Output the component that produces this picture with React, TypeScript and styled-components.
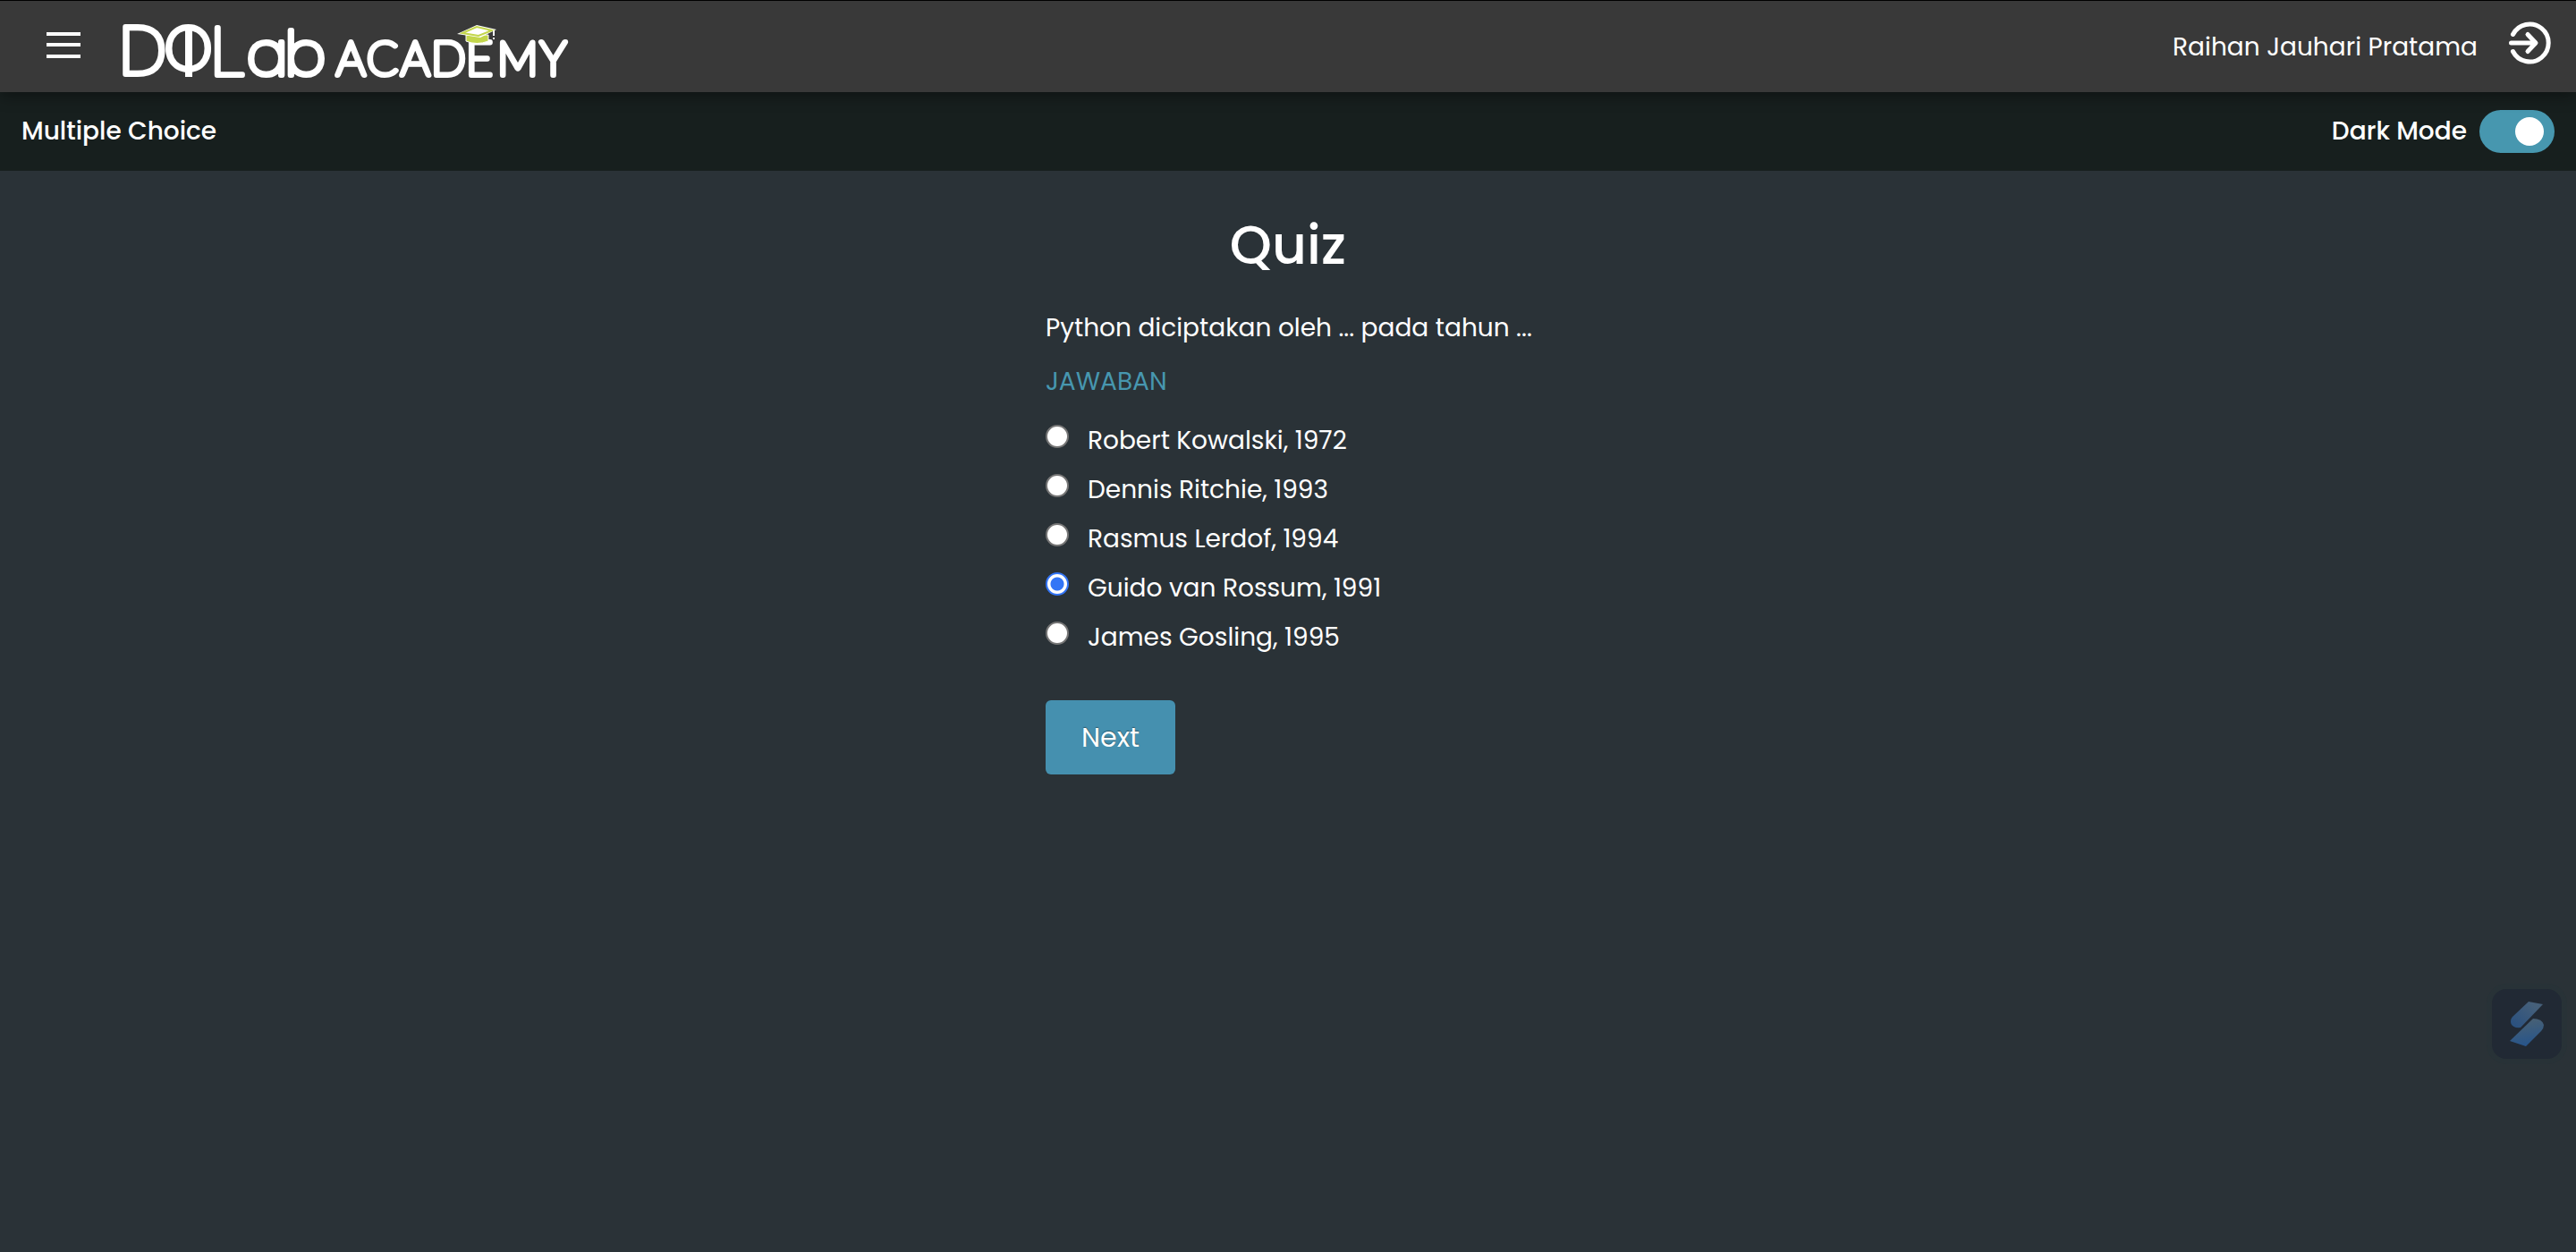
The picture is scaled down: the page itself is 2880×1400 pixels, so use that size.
import React, { useState } from "react";
import styled, { createGlobalStyle } from "styled-components";

const GlobalStyle = createGlobalStyle`
  *, *::before, *::after { box-sizing: border-box; }
  body {
    margin: 0;
    background: #2a3237;
    color: #fff;
    font-family: Poppins, Inter, "Liberation Sans", sans-serif;
    font-size: 28px;
    line-height: 42px;
  }
`;

const Page = styled.div`
  border-top: 1px solid #000;
  min-height: 100vh;
`;

const Header = styled.header`
  display: flex;
  align-items: center;
  height: 102px;
  padding: 0 28px 0 52px;
  background: #393939;
  position: relative;
  box-shadow: 0 4px 16px rgba(0, 0, 0, 0.4);
`;

const IconButton = styled.button`
  display: flex;
  padding: 0;
  border: 0;
  background: none;
  color: inherit;
  cursor: pointer;
`;

const HomeLink = styled.a`
  display: flex;
  margin-left: 30px;
`;

const Account = styled.div`
  display: flex;
  align-items: center;
  gap: 35px;
  margin-left: auto;
`;

const UserName = styled.span`
  padding-top: 2px;
`;

const SubBar = styled.div`
  display: flex;
  align-items: center;
  justify-content: space-between;
  height: 88px;
  padding: 0 24px;
  background: #171f1e;
  font-weight: 500;
`;

const SubTitle = styled.h1`
  margin: 0;
  font-size: 28px;
  font-weight: 500;
`;

const ModeLabel = styled.label`
  display: flex;
  align-items: center;
  gap: 14px;
  cursor: pointer;
`;

const Switch = styled.input`
  appearance: none;
  display: flex;
  align-items: center;
  width: 84px;
  height: 48px;
  margin: 0;
  padding: 0 12px;
  border-radius: 24px;
  background: #8a9499;
  cursor: pointer;

  &::before {
    content: "";
    width: 32px;
    height: 32px;
    border-radius: 50%;
    background: #fff;
  }
  &:checked {
    justify-content: flex-end;
    background: #4797af;
  }
`;

const Content = styled.main`
  width: 542px;
  max-width: 100%;
  margin: 0 auto;
  padding-top: 43px;
`;

const Title = styled.h2`
  margin: 0 0 32px;
  font-size: 60px;
  line-height: 80px;
  font-weight: 500;
  text-align: center;
`;

const Question = styled.p`
  margin: 0 0 18px;
  white-space: nowrap;
`;

const Answers = styled.fieldset`
  display: flex;
  flex-direction: column;
  gap: 13px;
  margin: 0;
  padding: 0;
  border: 0;
`;

const Legend = styled.legend`
  padding: 0;
  margin-bottom: 24px;
  color: #4797af;
`;

const Option = styled.label`
  display: flex;
  gap: 21px;
  cursor: pointer;
`;

const Radio = styled.input`
  appearance: none;
  width: 26px;
  height: 26px;
  margin: 3px 0 0;
  border: 2px solid #767676;
  border-radius: 50%;
  background: #fff;

  &:checked {
    border-color: #3375f6;
    background: radial-gradient(circle, #3375f6 7px, #fff 8px);
  }
`;

const NextButton = styled.button`
  margin-top: 49px;
  width: 145px;
  height: 83px;
  border: 0;
  border-radius: 6px;
  background: #4590af;
  color: #fff;
  font: inherit;
  font-size: 30px;
  text-shadow: 0 -1px 1px rgba(0, 0, 0, 0.4);
  cursor: pointer;
`;

const Widget = styled.button`
  position: fixed;
  right: 10px;
  bottom: 210px;
  display: grid;
  place-items: center;
  width: 90px;
  height: 90px;
  padding: 0;
  border: 6px solid #283237;
  border-radius: 22px;
  background: #212934;
  cursor: pointer;
`;

const LogoText = styled.text<{ $family: string }>`
  fill: #fff;
  stroke: #fff;
  stroke-width: 6px;
  stroke-linejoin: round;
  stroke-linecap: round;
  font-family: ${(p) => p.$family}, Inter, sans-serif;
  font-weight: 200;
`;

const Logo = () => (
  <svg width="520" height="130" viewBox="120 -13 520 130" role="img" aria-label="DQLab Academy">
    <LogoText $family="Poppins" fontSize="74" x="134" y="83">D</LogoText>
    <LogoText $family="Poppins" fontSize="67" x="184" y="78">O</LogoText>
    <LogoText $family="Lato" fontSize="76" x="234" y="84">L</LogoText>
    <LogoText $family="Poppins" fontSize="67" x="276 319" y="84">ab</LogoText>
    <rect x="207" y="32" width="8" height="54" fill="#fff" />
    <LogoText $family="Lato" fontSize="51" x="376 410 448 482 521 556 604" y="84">ACADEMY</LogoText>
    <path d="M521 39v7q12 5 25 0v-7z" fill="#c3d64b" stroke="#fff" strokeWidth="1" />
    <path d="M511 38L533 28L555 33L537 42z" fill="#fff" />
    <path d="M517 37L533 30L550 34L535 40z" fill="#fff" stroke="#c3d64b" strokeWidth="2" />
    <path d="M552 34v6M552 42v2" stroke="#fff" strokeWidth="2" />
  </svg>
);

const answers = [
  "Robert Kowalski, 1972",
  "Dennis Ritchie, 1993",
  "Rasmus Lerdof, 1994",
  "Guido van Rossum, 1991",
  "James Gosling, 1995",
];

export default function App() {
  const [selected, setSelected] = useState(3);
  const [dark, setDark] = useState(true);

  return (
    <Page>
      <GlobalStyle />
      <Header>
        <IconButton type="button" aria-label="Menu">
          <svg width="38" height="32" viewBox="0 0 38 32" fill="#fff">
            <path d="M0 0h38v4H0zM0 12h38v4H0zM0 25h38v4H0z" />
          </svg>
        </IconButton>
        <HomeLink href="#">
          <Logo />
        </HomeLink>
        <Account>
          <UserName>Raihan Jauhari Pratama</UserName>
          <IconButton type="button" aria-label="Log out">
            <svg width="47" height="56" viewBox="0 0 47 56" fill="none" stroke="#fff" strokeWidth="5" strokeLinecap="round" strokeLinejoin="round">
              <path d="M4.500 14.500A21 21 0 1 1 4.500 33.500" />
              <path d="M2.500 24H29M21 14.500L30 24L21 33.500" />
            </svg>
          </IconButton>
        </Account>
      </Header>
      <SubBar>
        <SubTitle>Multiple Choice</SubTitle>
        <ModeLabel>
          Dark Mode
          <Switch type="checkbox" role="switch" checked={dark} onChange={() => setDark(!dark)} />
        </ModeLabel>
      </SubBar>
      <Content>
        <Title>Quiz</Title>
        <Question>Python diciptakan oleh ... pada tahun ...</Question>
        <Answers>
          <Legend>JAWABAN</Legend>
          {answers.map((answer, i) => (
            <Option key={answer}>
              <Radio type="radio" name="answer" checked={selected === i} onChange={() => setSelected(i)} />
              {answer}
            </Option>
          ))}
        </Answers>
        <NextButton type="button">Next</NextButton>
      </Content>
      <Widget type="button" aria-label="Assistant">
        <svg width="40" height="52" viewBox="0 0 40 52">
          <defs>
            <linearGradient id="upper" x1="1" y1="0" x2="0" y2="1">
              <stop offset="0.2" stopColor="#46607a" />
              <stop offset="1" stopColor="#274f80" />
            </linearGradient>
            <linearGradient id="lower" x1="0.4" y1="0" x2="0.6" y2="1">
              <stop offset="0" stopColor="#4a6173" />
              <stop offset="1" stopColor="#25548c" />
            </linearGradient>
          </defs>
          <path d="M22 1L38 4L13 30Q5 31 2.500 26Q1 21 4 18z" fill="url(#upper)" />
          <path d="M27 20Q37 20 39 27Q39 31 36 34L19 51L1 45z" fill="url(#lower)" />
        </svg>
      </Widget>
    </Page>
  );
}
